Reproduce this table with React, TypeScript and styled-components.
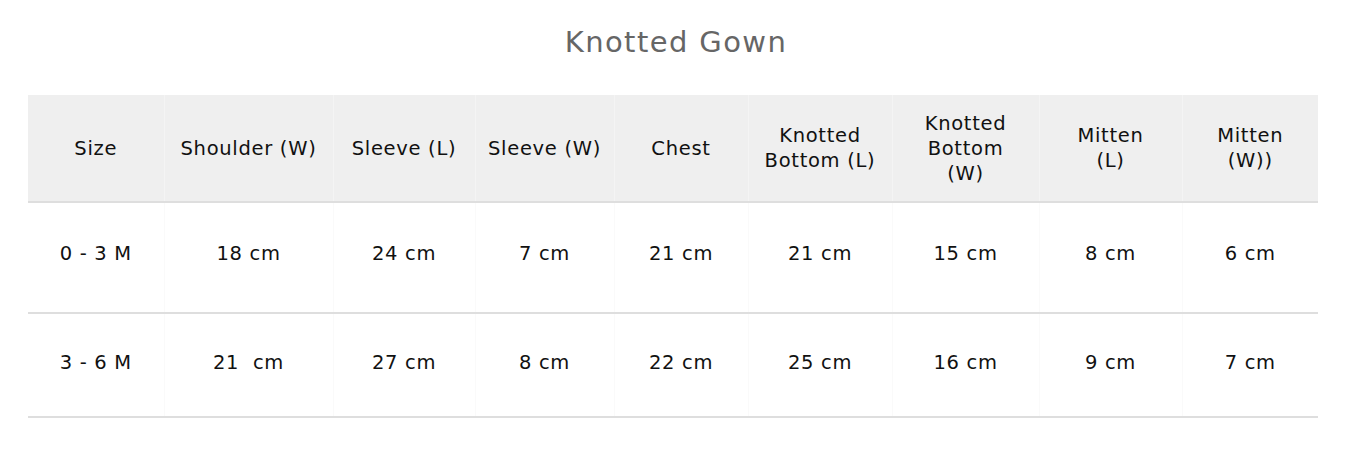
import React from 'react'
import styled, { createGlobalStyle } from 'styled-components'

const GlobalStyle = createGlobalStyle`
  body {
    margin: 0;
    background: #fff;
    font-family: 'DejaVu Sans', 'Open Sans', sans-serif;
  }
`

const columns = [
  { label: ['Size'], width: 136 },
  { label: ['Shoulder (W)'], width: 169 },
  { label: ['Sleeve (L)'], width: 142 },
  { label: ['Sleeve (W)'], width: 139 },
  { label: ['Chest'], width: 134 },
  { label: ['Knotted', 'Bottom (L)'], width: 144 },
  { label: ['Knotted', 'Bottom', '(W)'], width: 147 },
  { label: ['Mitten', '(L)'], width: 143 },
  { label: ['Mitten', '(W))'], width: 136 },
]

const rows = [
  { pad: [39, 46], cells: ['0 - 3 M', '18 cm', '24 cm', '7 cm', '21 cm', '21 cm', '15 cm', '8 cm', '6 cm'] },
  { pad: [37, 41], cells: ['3 - 6 M', '21\u00a0 cm', '27 cm', '8 cm', '22 cm', '25 cm', '16 cm', '9 cm', '7 cm'] },
]

const App = () => (
  <>
    <GlobalStyle />
    <Page>
      <Title>Knotted Gown</Title>
      <Table>
        <colgroup>
          {columns.map((c, i) => (
            <col key={i} style={{ width: c.width }} />
          ))}
        </colgroup>
        <thead>
          <tr>
            {columns.map((c, i) => (
              <HeadCell key={i}>
                {c.label.map((line, k) => (
                  <HeadLine key={k}>{line}</HeadLine>
                ))}
              </HeadCell>
            ))}
          </tr>
        </thead>
        <tbody>
          {rows.map((r, i) => (
            <Row key={i}>
              {r.cells.map((v, j) => (
                <Cell key={j} $top={r.pad[0]} $bottom={r.pad[1]}>
                  {v}
                </Cell>
              ))}
            </Row>
          ))}
        </tbody>
      </Table>
    </Page>
  </>
)

export default App

// Styles
const Page = styled.div`
  padding: 24px 28px 0 28px;
`

const Title = styled.h2`
  margin: 0 0 35px 0;
  font-size: 29px;
  font-weight: 500;
  line-height: 36px;
  letter-spacing: 1.4px;
  text-align: center;
  color: #666;
`

const Table = styled.table`
  width: 1290px;
  border-collapse: collapse;
  table-layout: fixed;
`

const HeadCell = styled.th`
  height: 106px;
  padding: 0 6px;
  background: #efefef;
  border-left: 1px solid #f4f4f4;
  border-bottom: 2px solid #dedede;
  font-size: 19.5px;
  font-weight: 400;
  line-height: 25px;
  letter-spacing: 0.7px;
  color: #111;
  text-align: center;
  vertical-align: middle;

  &:first-child {
    border-left: none;
  }
`

const HeadLine = styled.span`
  display: block;
  white-space: nowrap;
`

const Row = styled.tr`
  border-bottom: 2px solid #dedede;
`

const Cell = styled.td<{ $top: number; $bottom: number }>`
  padding: ${p => p.$top}px 6px ${p => p.$bottom}px 6px;
  border-left: 1px solid #fafafa;
  font-size: 19.5px;
  line-height: 24px;
  letter-spacing: 0.7px;
  color: #111;
  text-align: center;
  vertical-align: middle;

  &:first-child {
    border-left: none;
  }
`
